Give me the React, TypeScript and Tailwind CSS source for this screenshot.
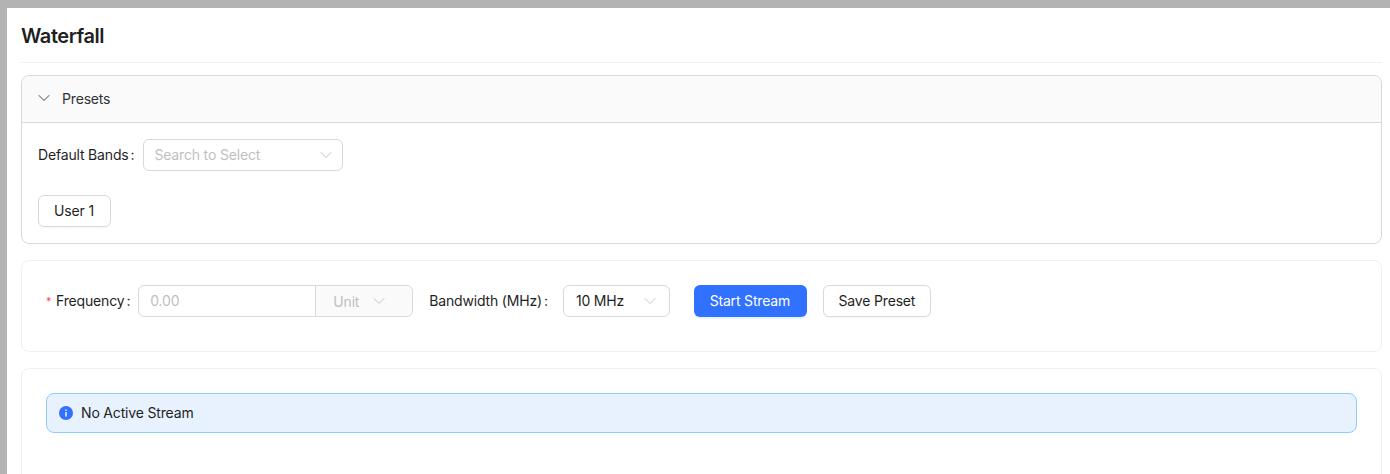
import { ChevronDown } from "lucide-react";

const Caret = ({ className }: { className: string }) => (
  <ChevronDown size={20} strokeWidth={1.1} className={className} />
);

const App = () => {
  return (
    <div className="h-[474px] w-[1390px] overflow-hidden bg-[#b3b3b3] pl-[7px] pt-[8px] font-['Inter',sans-serif] text-[14px] tracking-[-0.17px] text-[#1f1f1f]">
      <div className="h-full bg-white pl-[14px] pr-[8px]">
        {/* page title */}
        <div className="flex h-[55px] items-center border-b border-[#f0f0f0] pt-[1px]">
          <h1 className="text-[20px] font-semibold leading-[28px] tracking-[-0.45px] text-[#1f1f1f]">Waterfall</h1>
        </div>

        {/* presets */}
        <div className="mt-[12px] h-[169px] rounded-[8px] border border-[#d9d9d9]">
          <div className="flex h-[47px] items-center rounded-t-[8px] border-b border-[#d9d9d9] bg-[#fafafa] pb-[2px] pl-[12px]">
            <ChevronDown size={20} strokeWidth={1.1} className="text-[#333333]" />
            <span className="ml-[8px] text-[#333333]">Presets</span>
          </div>
          <div className="px-[16px] pt-[16px]">
            <div className="flex items-center">
              <span className="pb-[2px]">Default Bands</span>
              <span className="ml-[2px] mr-[9px] pb-[2px]">:</span>
              <div className="flex h-[32px] w-[200px] items-center justify-between rounded-[6px] border border-[#d9d9d9] pb-[2px] pl-[10px] pr-[6px] text-[#bfbfbf]">
                <span>Search to Select</span>
                <Caret className="mt-[2px] text-[#bfbfbf]" />
              </div>
            </div>
            <button className="mt-[24px] flex h-[32px] w-[73px] items-center justify-center rounded-[6px] border border-[#d9d9d9] bg-white pb-[2px] pr-[1px] shadow-[0_2px_0_rgba(0,0,0,0.02)]">
              User 1
            </button>
          </div>
        </div>

        {/* stream form */}
        <div className="mt-[16px] flex h-[92px] items-start rounded-[8px] border border-[#f0f0f0] pl-[24px] pt-[24px]">
          <div className="flex h-[32px] items-center">
            <span className="w-[10px] pt-[1px] text-[11px] text-[#ff4d4f]">*</span>
            <span className="pb-[2px]">Frequency</span>
            <span className="ml-[2px] mr-[8px] pb-[2px]">:</span>
            <div className="flex h-[32px] w-[275px] rounded-[6px] border border-[#d9d9d9]">
              <div className="flex w-[176px] items-center pb-[2px] pl-[11px] text-[#bfbfbf]">0.00</div>
              <div className="flex flex-1 items-center rounded-r-[6px] border-l border-[#d9d9d9] bg-[#fafafa] pl-[17px] text-[#bfbfbf]">
                <span>Unit</span>
                <Caret className="ml-[10px] text-[#bfbfbf]" />
              </div>
            </div>
          </div>
          <div className="ml-[16px] flex h-[32px] items-center">
            <span className="pb-[2px]">Bandwidth (MHz)</span>
            <span className="ml-[2px] mr-[15px] pb-[2px]">:</span>
            <div className="flex h-[32px] w-[107px] items-center justify-between rounded-[6px] border border-[#d9d9d9] pb-[2px] pl-[12px] pr-[9px]">
              <span>10 MHz</span>
              <Caret className="mt-[2px] text-[#bfbfbf]" />
            </div>
          </div>
          <button className="ml-[24px] flex h-[32px] w-[113px] items-center justify-center rounded-[6px] bg-[#3071ff] pb-[2px] pr-[1px] text-white shadow-[0_2px_0_rgba(5,145,255,0.1)]">
            Start Stream
          </button>
          <button className="ml-[16px] flex h-[32px] w-[108px] items-center justify-center rounded-[6px] border border-[#d9d9d9] bg-white pb-[2px] shadow-[0_2px_0_rgba(0,0,0,0.02)]">
            Save Preset
          </button>
        </div>

        {/* stream status */}
        <div className="mt-[16px] h-[200px] rounded-[8px] border border-[#f0f0f0] px-[24px] pt-[24px]">
          <div className="flex h-[40px] items-center rounded-[8px] border border-[#91caff] bg-[#e8f2fe] pb-[1px] pl-[12px]">
            <svg viewBox="0 0 14 14" className="h-[14px] w-[14px]">
              <circle cx="7" cy="7" r="7" fill="#3071ff" />
              <rect x="6.3" y="6" width="1.4" height="4.6" fill="#ffffff" />
              <rect x="6.3" y="3.4" width="1.4" height="1.5" fill="#ffffff" />
            </svg>
            <span className="ml-[8px] pb-[1px]">No Active Stream</span>
          </div>
        </div>
      </div>
    </div>
  );
};

export default App;
